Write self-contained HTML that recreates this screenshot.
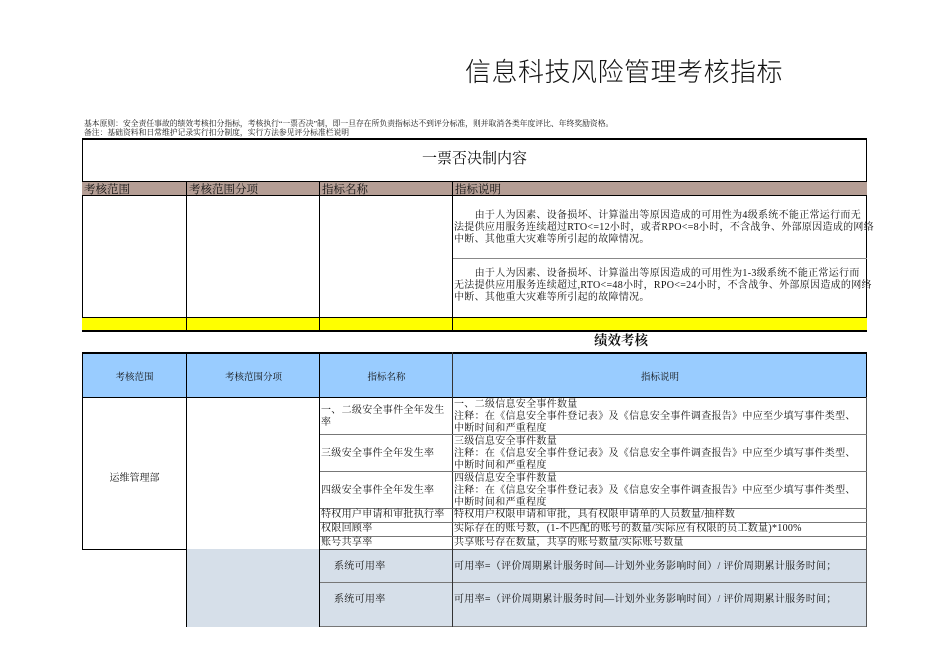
<!DOCTYPE html>
<html><head><meta charset="utf-8"><style>
body{margin:0;width:950px;height:672px;background:#fff;position:relative;overflow:hidden;font-family:"Liberation Serif","Noto Serif CJK SC",serif;color:#111}
.a{position:absolute;white-space:nowrap}
.c{position:absolute;box-sizing:border-box}
.t{font-size:10px;line-height:12px;letter-spacing:0.3px}
</style></head><body>
<div class="a" style="left:465px;top:52px;font-size:26px;letter-spacing:0.5px;font-family:'Noto Sans CJK SC',sans-serif;font-weight:300">信息科技风险管理考核指标</div>
<div class="a" style="left:84px;top:119px;font-size:7.8px;line-height:9px">基本原则：安全责任事故的绩效考核扣分指标，考核执行“一票否决”制，即一旦存在所负责指标达不到评分标准，则并取消各类年度评比、年终奖励资格。<br>备注：基础资料和日常维护记录实行扣分制度，实行方法参见评分标准栏说明</div>

<div class="c" style="left:82px;top:138px;width:785px;height:194px;border:1px solid #000;border-top:2px solid #000"></div>
<div class="a" style="left:82px;top:147px;width:785px;text-align:center;font-size:15px">一票否决制内容</div>
<div class="c" style="left:82px;top:181px;width:785px;height:15px;background:#b59e95;border-top:1px solid #000;border-bottom:1px solid #000"></div>
<div class="a" style="left:84px;top:181px;font-size:11.5px">考核范围</div>
<div class="a" style="left:189px;top:181px;font-size:11.5px">考核范围分项</div>
<div class="a" style="left:322px;top:181px;font-size:11.5px">指标名称</div>
<div class="a" style="left:455px;top:181px;font-size:11.5px">指标说明</div>
<div class="c" style="left:82px;top:317px;width:785px;height:14px;background:#ffff00;border-top:1px solid #000;border-bottom:1px solid #000"></div>
<div class="c" style="left:186px;top:181px;width:1px;height:150px;background:#000"></div>
<div class="c" style="left:319px;top:181px;width:1px;height:150px;background:#000"></div>
<div class="c" style="left:452px;top:181px;width:1px;height:150px;background:#000"></div>
<div class="c" style="left:453px;top:258px;width:414px;height:1px;background:#888"></div>
<div class="a t" style="left:454px;top:210px">　　由于人为因素、设备损坏、计算溢出等原因造成的可用性为4级系统不能正常运行而无<br>法提供应用服务连续超过RTO&lt;=12小时，或者RPO&lt;=8小时，不含战争、外部原因造成的网络<br>中断、其他重大灾难等所引起的故障情况。</div>
<div class="a t" style="left:454px;top:268px">　　由于人为因素、设备损坏、计算溢出等原因造成的可用性为1-3级系统不能正常运行而<br>无法提供应用服务连续超过,RTO&lt;=48小时，RPO&lt;=24小时，不含战争、外部原因造成的网络<br>中断、其他重大灾难等所引起的故障情况。</div>

<div class="a" style="left:594px;top:329px;font-size:13.5px;font-weight:bold">绩效考核</div>

<div class="c" style="left:82px;top:352px;width:785px;height:46px;background:#99ccff;border:1px solid #000;border-top:2px solid #000"></div>
<div class="a" style="left:82px;top:369px;width:105px;text-align:center;font-size:9.5px">考核范围</div>
<div class="a" style="left:187px;top:369px;width:133px;text-align:center;font-size:9.5px">考核范围分项</div>
<div class="a" style="left:320px;top:369px;width:133px;text-align:center;font-size:9.5px">指标名称</div>
<div class="a" style="left:453px;top:369px;width:414px;text-align:center;font-size:9.5px">指标说明</div>
<div class="c" style="left:82px;top:397px;width:1px;height:153px;background:#000"></div>
<div class="c" style="left:82px;top:549px;width:105px;height:1px;background:#000"></div>
<div class="c" style="left:187px;top:549px;width:680px;height:78px;background:#d6dfe9"></div>
<div class="c" style="left:320px;top:582px;width:547px;height:1px;background:#777"></div>
<div class="c" style="left:320px;top:549px;width:547px;height:1px;background:#555"></div>
<div class="c" style="left:320px;top:626px;width:547px;height:1px;background:#777"></div>
<div class="c" style="left:866px;top:397px;width:1px;height:230px;background:#555"></div>
<div class="c" style="left:186px;top:352px;width:1px;height:275px;background:#000"></div>
<div class="c" style="left:319px;top:352px;width:1px;height:275px;background:#000"></div>
<div class="c" style="left:452px;top:352px;width:1px;height:275px;background:#333"></div>
<div class="c" style="left:320px;top:434px;width:547px;height:1px;background:#777"></div>
<div class="c" style="left:320px;top:471px;width:547px;height:1px;background:#777"></div>
<div class="c" style="left:320px;top:508px;width:547px;height:1px;background:#777"></div>
<div class="c" style="left:320px;top:522px;width:547px;height:1px;background:#777"></div>
<div class="c" style="left:320px;top:536px;width:547px;height:1px;background:#777"></div>
<div class="a" style="left:82px;top:469px;width:105px;text-align:center;font-size:10px">运维管理部</div>
<div class="a t" style="left:321px;top:405px">一、二级安全事件全年发生<br>率</div>
<div class="a t" style="left:321px;top:448px">三级安全事件全年发生率</div>
<div class="a t" style="left:321px;top:485px">四级安全事件全年发生率</div>
<div class="a t" style="left:321px;top:509px">特权用户申请和审批执行率</div>
<div class="a t" style="left:321px;top:523px">权限回顾率</div>
<div class="a t" style="left:321px;top:537px">账号共享率</div>
<div class="a t" style="left:454px;top:399px">一、二级信息安全事件数量<br>注释：在《信息安全事件登记表》及《信息安全事件调查报告》中应至少填写事件类型、<br>中断时间和严重程度</div>
<div class="a t" style="left:454px;top:436px">三级信息安全事件数量<br>注释：在《信息安全事件登记表》及《信息安全事件调查报告》中应至少填写事件类型、<br>中断时间和严重程度</div>
<div class="a t" style="left:454px;top:473px">四级信息安全事件数量<br>注释：在《信息安全事件登记表》及《信息安全事件调查报告》中应至少填写事件类型、<br>中断时间和严重程度</div>
<div class="a t" style="left:454px;top:509px">特权用户权限申请和审批，具有权限申请单的人员数量/抽样数</div>
<div class="a t" style="left:454px;top:523px">实际存在的账号数，(1-不匹配的账号的数量/实际应有权限的员工数量)*100%</div>
<div class="a t" style="left:454px;top:537px">共享账号存在数量，共享的账号数量/实际账号数量</div>
<div class="a t" style="left:334px;top:561px">系统可用率</div>
<div class="a t" style="left:334px;top:594px">系统可用率</div>
<div class="a t" style="left:454px;top:561px">可用率=（评价周期累计服务时间—计划外业务影响时间）/ 评价周期累计服务时间；</div>
<div class="a t" style="left:454px;top:594px">可用率=（评价周期累计服务时间—计划外业务影响时间）/ 评价周期累计服务时间；</div>
</body></html>
